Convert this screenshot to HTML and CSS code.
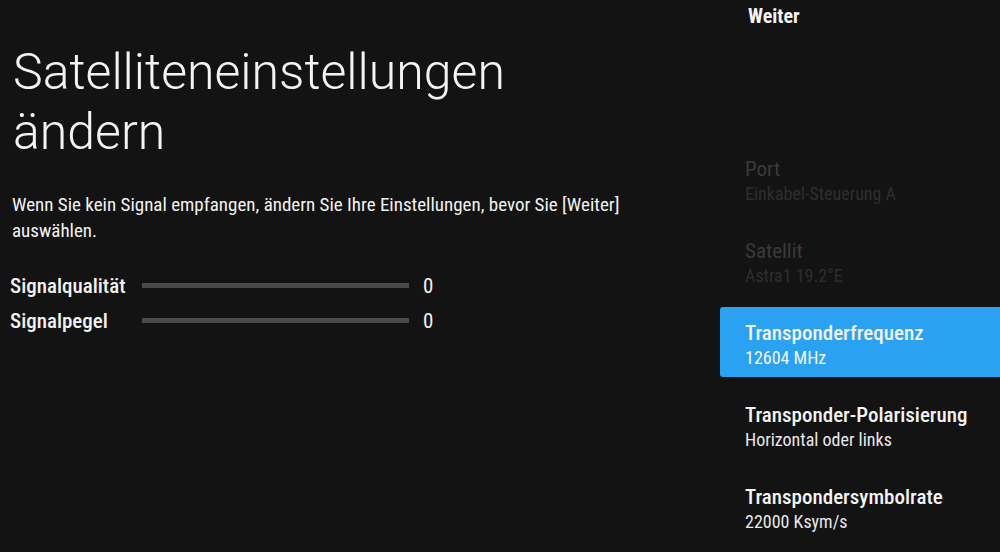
FILE: index.html
```html
<!DOCTYPE html>
<html lang="de">
<head>
<meta charset="utf-8">
<title>Satelliteneinstellungen ändern</title>
<link rel="stylesheet" href="styles.css">
</head>
<body>
<main class="screen">
  <section class="content">
    <h1 class="title">Satelliteneinstellungen<br>ändern</h1>
    <p class="desc">Wenn Sie kein Signal empfangen, ändern Sie Ihre Einstellungen, bevor Sie [Weiter] auswählen.</p>
    <div class="signals">
      <span class="sig-label">Signalqualität</span>
      <span class="sig-bar"></span>
      <span class="sig-value">0</span>
      <span class="sig-label">Signalpegel</span>
      <span class="sig-bar"></span>
      <span class="sig-value">0</span>
    </div>
  </section>
  <nav class="panel">
    <div class="item item-action"><span class="item-title">Weiter</span></div>
    <div class="item item-spacer"></div>
    <div class="item item-disabled">
      <span class="item-title">Port</span>
      <span class="item-sub">Einkabel-Steuerung A</span>
    </div>
    <div class="item item-disabled">
      <span class="item-title">Satellit</span>
      <span class="item-sub">Astra1 19.2°E</span>
    </div>
    <div class="item item-focused">
      <span class="item-title">Transponderfrequenz</span>
      <span class="item-sub">12604 MHz</span>
    </div>
    <div class="item">
      <span class="item-title">Transponder-Polarisierung</span>
      <span class="item-sub">Horizontal oder links</span>
    </div>
    <div class="item">
      <span class="item-title">Transpondersymbolrate</span>
      <span class="item-sub">22000 Ksym/s</span>
    </div>
  </nav>
</main>
</body>
</html>
```
FILE: styles.css
```css
* { box-sizing: border-box; }
html, body {
  margin: 0;
  padding: 0;
  background: #131313;
  width: 1000px;
  height: 552px;
  overflow: hidden;
}
.screen {
  display: flex;
  width: 1000px;
  height: 552px;
  font-family: "Roboto Condensed", Roboto, "Liberation Sans", sans-serif;
  color: #f2f2f2;
}
.content {
  width: 720px;
  padding: 42px 0 0 12px;
}
.title {
  margin: 0 0 0 1px;
  font-family: Roboto, "Liberation Sans", sans-serif;
  font-weight: 300;
  font-size: 50px;
  line-height: 60px;
  color: #f4f4f4;
}
.desc {
  margin: 30px 0 0 0;
  width: 630px;
  font-size: 19px;
  line-height: 26px;
  color: #f2f2f2;
}
.signals {
  margin-top: 25px;
  display: grid;
  grid-template-columns: 120px 267px auto;
  column-gap: 12px;
  align-items: center;
  margin-left: -2px;
}
.sig-label {
  font-size: 21px;
  line-height: 35px;
  font-weight: 500;
}
.sig-bar {
  height: 5px;
  background: #4a4a4a;
  margin-top: -2px;
}
.sig-value {
  font-size: 21px;
  line-height: 35px;
  padding-left: 2px;
}
.panel {
  flex: 1;
  display: flex;
  flex-direction: column;
  gap: 12px;
}
.item {
  flex: none;
  height: 70px;
  padding: 14px 0 0 25px;
  display: flex;
  flex-direction: column;
  border-radius: 3px 0 0 3px;
}
.item-action {
  height: 40px;
  padding: 4px 0 0 28px;
}
.item-spacer { height: 79px; }
.item-title {
  font-size: 21px;
  line-height: 25px;
  font-weight: 500;
  color: #f4f4f4;
}
.item-sub {
  font-size: 18px;
  line-height: 24px;
  color: #e8e8e8;
}
.item-disabled .item-title {
  font-weight: 400;
  color: #3a3a3a;
}
.item-disabled .item-sub { color: #2e2e2e; }
.item-focused { background: #2aa2f1; }
.item-focused .item-sub { color: #f4f4f4; }
.item-action .item-title { font-weight: 700; font-size: 20px; }
```
